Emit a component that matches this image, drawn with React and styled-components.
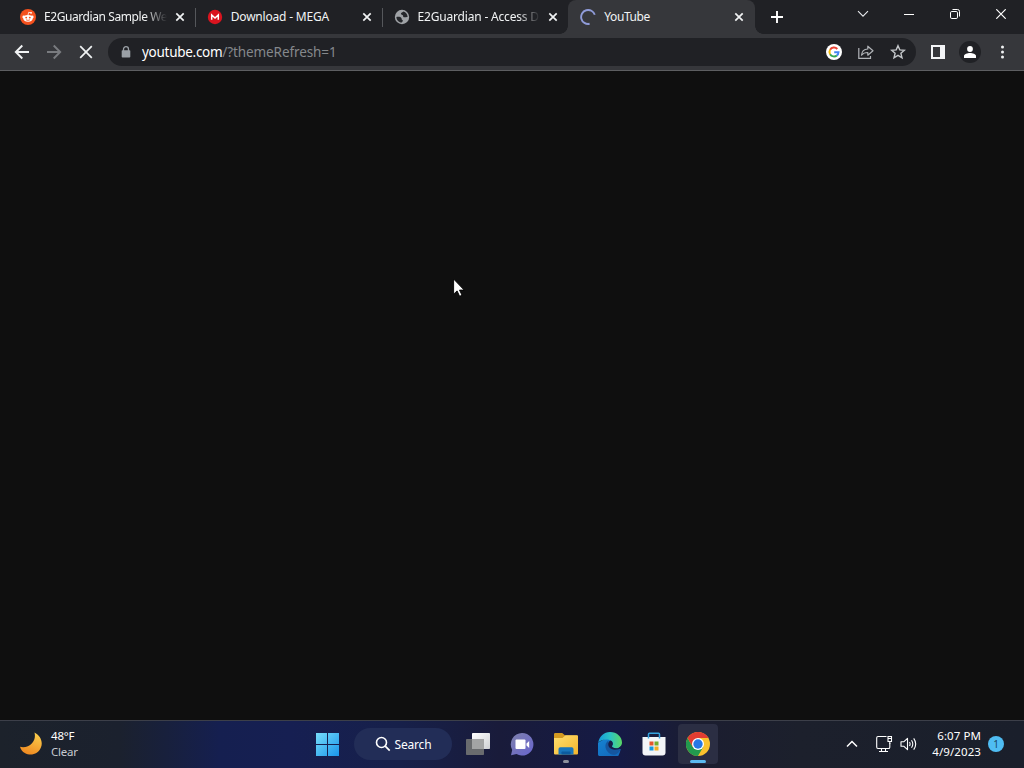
import React from 'react';
import styled, { createGlobalStyle } from 'styled-components';

const GlobalStyle = createGlobalStyle`
  * {
    box-sizing: border-box;
  }
  body {
    margin: 0;
    overflow: hidden;
    background: #0f0f0f;
    font-family: 'Noto Sans', 'Open Sans', sans-serif;
  }
  svg {
    display: block;
    flex: none;
  }
`

const RedditIcon = () => (
  <svg width="16" height="16" viewBox="0 0 16 16">
    <circle cx="8" cy="8" r="8" fill="#f4511e" />
    <circle cx="3.7" cy="7.9" r="1.3" fill="#fff" />
    <circle cx="12.3" cy="7.9" r="1.3" fill="#fff" />
    <ellipse cx="8" cy="9.3" rx="4.7" ry="3.4" fill="#fff" />
    <path d="M8 6 8.7 3.3 11 3.8" fill="none" stroke="#fff" strokeWidth="0.8" />
    <circle cx="11.1" cy="3.8" r="0.9" fill="#fff" />
    <circle cx="6.2" cy="8.6" r="0.95" fill="#f4511e" />
    <circle cx="9.8" cy="8.6" r="0.95" fill="#f4511e" />
    <path d="M6 10.8q2 1.2 4 0" fill="none" stroke="#f4511e" strokeWidth="0.8" />
  </svg>
)

const MegaIcon = () => (
  <svg width="16" height="16" viewBox="0 0 16 16">
    <circle cx="8" cy="8" r="7.2" fill="#d9141f" />
    <path d="M4.700 10.800V5.900L8 9l3.300-3.100v4.900" fill="none" stroke="#fff" strokeWidth="1.500" />
  </svg>
)

const GlobeIcon = () => (
  <svg width="16" height="16" viewBox="0 0 16 16">
    <circle cx="8" cy="8" r="7.2" fill="#9fa2a6" />
    <path d="M2.400 8c2-.4 4.400-.2 5 1 .5.900-.2 1.500 1 1.900 1 .4.300 1.500-.7 2.700C4.600 13.400 2.400 11 2.400 8z" fill="#25272b" />
    <path d="M9.500 2.600c-.6 1-2.600.9-2.600 2.200 0 1.100 1.600.7 2.100 1.600.4.800-.2 1.600.9 1.900 1.400.3 2.300-.6 3.700-.3-.1-2.700-1.700-4.700-4.100-5.400z" fill="#25272b" />
  </svg>
)

const LoadingIcon = () => (
  <svg width="16" height="16" viewBox="0 0 16 16">
    <path d="M14.800 5.800A7 7 0 1 0 9.600 14.800" fill="none" stroke="#8f9bd8" strokeWidth="1.900" />
  </svg>
)

const CloseIcon = () => (
  <svg width="10" height="10" viewBox="0 0 10 10">
    <path d="M1.300 1.300l7.400 7.400M8.700 1.300l-7.400 7.400" stroke="#f1f3f4" strokeWidth="1.700" />
  </svg>
)

const GoogleIcon = () => (
  <svg width="16" height="16" viewBox="0 0 16 16">
    <circle cx="8" cy="8" r="8" fill="#fff" />
    <g fill="none" strokeWidth="2">
      <path d="M11.300 5A4.500 4.500 0 0 0 4.100 5.800" stroke="#ea4335" />
      <path d="M4.100 5.700a4.500 4.500 0 0 0 0 4.600" stroke="#fbbc05" />
      <path d="M4.100 10.200A4.500 4.500 0 0 0 10.900 11.400" stroke="#34a853" />
      <path d="M10.800 11.500A4.500 4.500 0 0 0 12.500 8.200H8.200" stroke="#4285f4" />
    </g>
  </svg>
)

const MoonIcon = () => (
  <svg width="24" height="24" viewBox="0 0 24 24">
    <defs>
      <linearGradient id="moon" x1="0.8" y1="0" x2="0.4" y2="1">
        <stop offset="0" stopColor="#fbd04e" />
        <stop offset="1" stopColor="#ef8a21" />
      </linearGradient>
    </defs>
    <path d="M15.500 .500C21 3.300 24.300 9.500 22 15.300 19.300 22.500 11.500 24.300 5.800 21.100 3.500 19.800 1.800 17.400 1 14.800 5 15.800 10 14.800 13 11.300 15.700 8.100 16.500 4.500 15.500.500z" fill="url(#moon)" />
  </svg>
)

const WindowsIcon = () => (
  <svg width="24" height="24" viewBox="0 0 24 24">
    <defs>
      <linearGradient id="win" x1="0" y1="0" x2="24" y2="24" gradientUnits="userSpaceOnUse">
        <stop offset="0" stopColor="#7be0fb" />
        <stop offset="1" stopColor="#1995ea" />
      </linearGradient>
    </defs>
    <path d="M1 1h11v11H1zM13 1h11v11H13zM1 13h11v11H1zM13 13h11v11H13z" fill="url(#win)" />
  </svg>
)

const TaskViewIcon = () => (
  <svg width="24" height="24" viewBox="0 0 24 24">
    <defs>
      <linearGradient id="pane" x1="0" y1="0" x2="1" y2="1">
        <stop offset="0" stopColor="#fff" />
        <stop offset="1" stopColor="#ced0d4" />
      </linearGradient>
    </defs>
    <rect y="7" width="18" height="16" rx="0.8" fill="#696b6e" />
    <rect x="6" y="1" width="18" height="16" rx="0.8" fill="url(#pane)" />
    <path d="M6 7h12v10H6z" fill="#a3a4a5" />
  </svg>
)

const ChatIcon = () => (
  <svg width="24" height="24" viewBox="0 0 24 24">
    <defs>
      <linearGradient id="chat" x1="0" y1="0" x2="1" y2="1">
        <stop offset="0" stopColor="#7d80ac" />
        <stop offset="1" stopColor="#6864cf" />
      </linearGradient>
    </defs>
    <path d="M12 1a11.300 11.300 0 1 1-5.500 21.100L1 23.200l1.200-5.300A11.300 11.300 0 0 1 12 1z" fill="url(#chat)" />
    <rect x="5.500" y="7.500" width="10" height="9.500" rx="1" fill="#fff" />
    <path d="M16.500 11.500l2.700-2.600v7.200l-2.700-2.600z" fill="#fff" />
  </svg>
)

const FolderIcon = () => (
  <svg width="24" height="24" viewBox="0 0 24 24">
    <defs>
      <linearGradient id="folder" x1="0" y1="0" x2="1" y2="1">
        <stop offset="0" stopColor="#ffe06f" />
        <stop offset="1" stopColor="#f5b52c" />
      </linearGradient>
    </defs>
    <path d="M0 2.200Q0 1 1.200 1h7l3 2.500h11.600Q24 3.500 24 5v8H0z" fill="#d49a20" />
    <path d="M0 6h8.500l3-2.800H23q1 0 1 1v17.300q0 1-1 1H1q-1 0-1-1z" fill="url(#folder)" />
    <path d="M4.500 22.500V17q0-1.800 1.800-1.800h11.400q1.800 0 1.800 1.800v5.500z" fill="#1976bb" />
    <path d="M7.500 22.500v-2.300q0-.7.700-.7h7.600q.7 0 .7.700v2.300z" fill="#0c5b9e" />
  </svg>
)

const EdgeIcon = () => (
  <svg width="24" height="24" viewBox="0 0 24 24">
    <defs>
      <linearGradient id="edgeTop" x1="0" y1="0.500" x2="1" y2="0.500">
        <stop offset="0" stopColor="#159bdc" />
        <stop offset="0.500" stopColor="#2cc3c4" />
        <stop offset="1" stopColor="#59d764" />
      </linearGradient>
      <linearGradient id="edgeBody" x1="0" y1="0" x2="0.600" y2="1">
        <stop offset="0" stopColor="#1687d5" />
        <stop offset="1" stopColor="#1267ba" />
      </linearGradient>
    </defs>
    <path d="M22.400 17.800A12 12 0 1 1 .3 10.500L12 4l8 10z" fill="url(#edgeBody)" />
    <path d="M.3 10.500C1.300 4.500 6 0 12 0c7 0 12 5 12 10.500 0 3.300-2.500 5.700-6 5.700-2.500 0-4-1-4-1.900 0-.7.900-1 .9-2.500C14.900 9.100 12 7.500 8.500 7.500 4.500 7.500 1.500 9 .3 10.500z" fill="url(#edgeTop)" />
    <path d="M10.600 8.400c-3 1.900-3.900 5.500-2.500 8.800 1.600 3.700 5 5.900 9 5.600 2.500-1.200 4.500-3.100 5.600-5.300.2-.5-.1-.7-.6-.4-2.300 1.100-5.300 1.200-7.800-.2-3.300-1.800-4.700-5.500-3.700-8.500z" fill="#15569f" />
    <path d="M14 14.300c0-.7.900-1 .9-2.500 0-1.400-.9-2.500-2.200-3.200-1.600.6-2.500 2-2.500 3.600 0 2.400 1.800 4.300 4.100 5 3 .9 5.800.6 7.800-.5l1.200-2.800c-1.100 1.500-2.900 2.300-5.300 2.300-2.500 0-4-1-4-1.900z" fill="#171d46" />
  </svg>
)

const StoreIcon = () => (
  <svg width="24" height="24" viewBox="0 0 24 24">
    <path d="M.5 5h23v15.500q0 3-3 3h-17q-3 0-3-3z" fill="#f3f5f8" />
    <path d="M6.500 6.500V2.200Q6.500 1.300 7.400 1.300h9.200q.9 0 .9.900v4.300" fill="none" stroke="#35a3df" strokeWidth="1.500" />
    <path d="M7.500 9.500h4v4h-4z" fill="#e4572e" />
    <path d="M12.500 9.500h4v4h-4z" fill="#75ad2e" />
    <path d="M7.500 14.500h4v4h-4z" fill="#1798df" />
    <path d="M12.500 14.500h4v4h-4z" fill="#f2ae24" />
  </svg>
)

const ChromeIcon = () => (
  <svg width="24" height="24" viewBox="0 0 24 24">
    <circle cx="12" cy="12" r="12" fill="#fbc22d" />
    <path d="M12 12 6.800 15 1.600 6A12 12 0 0 0 12 24l5.200-9z" fill="#229a4e" />
    <path d="M1.600 6A12 12 0 0 1 22.400 6H12L6.800 15z" fill="#e23c32" />
    <circle cx="12" cy="12" r="6" fill="#fff" />
    <circle cx="12" cy="12" r="4.700" fill="#2677e5" />
  </svg>
)

const tabs = [
  { title: 'E2Guardian Sample We', icon: <RedditIcon />, fade: true, spacing: '-0.42px' },
  { title: 'Download - MEGA', icon: <MegaIcon />, divider: true, spacing: '-0.2px' },
  { title: 'E2Guardian - Access D', icon: <GlobeIcon />, divider: true, fade: true, spacing: '-0.18px' },
  { title: 'YouTube', icon: <LoadingIcon />, active: true, spacing: '-0.4px' },
]

export const App = () => {
  return (
    <>
      <GlobalStyle />
      <Screen>
        <TabStrip>
          {tabs.map((tab) => (
            <Tab key={tab.title} $active={tab.active} $divider={tab.divider}>
              {tab.icon}
              <TabTitle $fade={tab.fade} $spacing={tab.spacing}>{tab.title}</TabTitle>
              <CloseIcon />
            </Tab>
          ))}
          <NewTab>
            <svg width="12" height="12" viewBox="0 0 12 12">
              <path d="M6 0v12M0 6h12" stroke="#fff" strokeWidth="1.900" />
            </svg>
          </NewTab>
          <WindowButtons>
            <WindowButton>
              <svg width="12" height="8" viewBox="0 0 12 8">
                <path d="M1 1.200l5 5 5-5" fill="none" stroke="#e8eaed" strokeWidth="1.100" />
              </svg>
            </WindowButton>
            <WindowButton>
              <svg width="10" height="10" viewBox="0 0 10 10">
                <path d="M0 5.500h10" stroke="#fff" />
              </svg>
            </WindowButton>
            <WindowButton>
              <svg width="10" height="10" viewBox="0 0 10 10">
                <rect x="0.500" y="2.500" width="7" height="7" rx="1.300" fill="none" stroke="#fff" />
                <path d="M2.500.5H7.500q2 0 2 2v5" fill="none" stroke="#fff" />
              </svg>
            </WindowButton>
            <WindowButton>
              <svg width="10" height="10" viewBox="0 0 10 10">
                <path d="M.3.300l9.400 9.400M9.700.300L.3 9.700" stroke="#fff" strokeWidth="1.200" />
              </svg>
            </WindowButton>
          </WindowButtons>
        </TabStrip>

        <Toolbar>
          <ToolButton>
            <svg width="16" height="16" viewBox="0 0 16 16">
              <path d="M15 8H2M8.300 1.500L1.800 8l6.500 6.500" fill="none" stroke="#f1f3f4" strokeWidth="1.900" />
            </svg>
          </ToolButton>
          <ToolButton>
            <svg width="16" height="16" viewBox="0 0 16 16">
              <path d="M1 8h13M7.700 1.500L14.200 8l-6.500 6.500" fill="none" stroke="#797b7f" strokeWidth="1.900" />
            </svg>
          </ToolButton>
          <ToolButton>
            <svg width="14" height="14" viewBox="0 0 14 14">
              <path d="M1.200 1.200l11.600 11.600M12.800 1.200L1.200 12.800" stroke="#f1f3f4" strokeWidth="1.700" />
            </svg>
          </ToolButton>
          <AddressBar>
            <svg width="10" height="12" viewBox="0 0 10 12">
              <path d="M2.500 5V3.200a2.500 2.500 0 0 1 5 0V5" fill="none" stroke="#9aa0a6" strokeWidth="1.300" />
              <rect x="0.700" y="4.300" width="8.600" height="7.200" rx="0.800" fill="#9aa0a6" />
            </svg>
            <Address><b>youtube.com</b>/?themeRefresh=1</Address>
            <AddressIcons>
              <GoogleIcon />
              <svg width="16" height="16" viewBox="0 0 16 16">
                <path d="M.8 4v10.400h11.700V12" fill="none" stroke="#b1b4b8" strokeWidth="1.200" />
                <path d="M3.500 11.200C3.800 7.500 6 5.200 9.800 5V2.200L15 6.700l-5.200 4.500V8.500c-2.800 0-4.800.8-6.300 2.700z" fill="none" stroke="#b1b4b8" strokeWidth="1.200" strokeLinejoin="round" />
              </svg>
              <svg width="16" height="16" viewBox="0 0 16 16">
                <path d="M8 1.700l1.800 4.200 4.600.4-3.500 3 1.100 4.500L8 11.400l-4 2.400 1.100-4.500-3.500-3 4.600-.4z" fill="none" stroke="#c4c7ca" strokeWidth="1.400" />
              </svg>
            </AddressIcons>
          </AddressBar>
          <ToolbarEnd>
            <svg width="14" height="14" viewBox="0 0 14 14">
              <path d="M0 0h14v14H0zM2 2v10h7V2z" fill="#f4f5f7" fillRule="evenodd" />
            </svg>
            <Profile>
              <svg width="12" height="12" viewBox="0 0 12 12">
                <circle cx="6" cy="3" r="2.900" fill="#fff" />
                <path d="M0 12v-2c0-2 3.500-3 6-3s6 1 6 3v2z" fill="#fff" />
              </svg>
            </Profile>
            <svg width="5" height="14" viewBox="0 0 5 14">
              <circle cx="2.500" cy="2" r="1.500" fill="#f1f3f4" />
              <circle cx="2.500" cy="7" r="1.500" fill="#f1f3f4" />
              <circle cx="2.500" cy="12" r="1.500" fill="#f1f3f4" />
            </svg>
          </ToolbarEnd>
        </Toolbar>

        <Page>
          <Cursor width="13" height="20" viewBox="0 0 13 20">
            <path d="M.6 1v15.200l3.500-3.300 2.500 5.400L9 17.200l-2.500-5.100h4.700z" fill="#fff" stroke="#000" strokeWidth="0.900" />
          </Cursor>
        </Page>

        <Taskbar>
          <Weather>
            <MoonIcon />
            <WeatherText>
              <div>48°F</div>
              <span>Clear</span>
            </WeatherText>
          </Weather>

          <Apps>
            <AppButton><WindowsIcon /></AppButton>
            <Search>
              <svg width="16" height="16" viewBox="0 0 16 16">
                <circle cx="6.500" cy="6.500" r="5" fill="none" stroke="#fff" strokeWidth="1.600" />
                <path d="M10.200 10.200l4.500 4.500" stroke="#fff" strokeWidth="1.700" />
              </svg>
              Search
            </Search>
            <AppButton><TaskViewIcon /></AppButton>
            <AppButton><ChatIcon /></AppButton>
            <AppButton $mark="#8d919c" $markWidth="6px"><FolderIcon /></AppButton>
            <AppButton><EdgeIcon /></AppButton>
            <AppButton><StoreIcon /></AppButton>
            <AppButton $active $mark="#5abaf0" $markWidth="16px"><ChromeIcon /></AppButton>
          </Apps>

          <Tray>
            <svg width="12" height="8" viewBox="0 0 12 8">
              <path d="M1 6.500l5-5 5 5" fill="none" stroke="#fff" strokeWidth="1.500" />
            </svg>
            <TrayIcons>
              <svg width="17" height="18" viewBox="0 0 17 18">
                <path d="M10.500 1.500H2Q.7 1.500.7 3v9Q.7 13.500 2 13.500h10.500q1.300 0 1.300-1.300V8M5.500 13.500v3M9.500 13.500v3M3 16.500h9" fill="none" stroke="#fff" strokeWidth="1.100" />
                <path d="M12 1.500h3.500v5H12zM12 3.500h3.500M13.800 6.500V9" fill="none" stroke="#fff" strokeWidth="1.100" />
              </svg>
              <svg width="17" height="16" viewBox="0 0 17 16">
                <path d="M1 5.800h2.700L7.500 2.300v11.400l-3.800-3.500H1z" fill="none" stroke="#fff" strokeWidth="1.100" strokeLinejoin="round" />
                <path d="M9.500 6q1.200 2 0 4M11.500 4.200q2.600 3.800 0 7.600M13.700 2.400q4 5.600 0 11.200" fill="none" stroke="#fff" strokeWidth="1.100" />
              </svg>
            </TrayIcons>
            <Clock>
              <div>6:07 PM</div>
              <div>4/9/2023</div>
            </Clock>
            <Badge>1</Badge>
          </Tray>
        </Taskbar>
      </Screen>
    </>
  )
}
export default App;

const Screen = styled.div`
  width: 1024px;
  height: 768px;
  display: flex;
  flex-direction: column;
  overflow: hidden;
`

const TabStrip = styled.div`
  height: 34px;
  padding-left: 8px;
  display: flex;
  background: #202125;
`

const Tab = styled.div`
  position: relative;
  width: 186.75px;
  height: 34px;
  padding: 0 ${({ $active }) => ($active ? '11px' : '10px')} 0 12px;
  display: flex;
  align-items: center;
  color: #f1f3f4;
  background: ${({ $active }) => ($active ? '#36373b' : 'transparent')};
  border-radius: 8px 8px 0 0;

  /* rounded feet of the selected tab */
  &::before,
  &::after {
    content: '';
    display: ${({ $active }) => ($active ? 'block' : 'none')};
    position: absolute;
    bottom: 0;
    width: 8px;
    height: 8px;
  }
  &::before {
    left: -8px;
    background: radial-gradient(circle at 0 0, transparent 7.5px, #36373b 8px);
  }
  &::after {
    right: -8px;
    background: radial-gradient(circle at 100% 0, transparent 7.5px, #36373b 8px);
  }

  ${({ $divider }) => $divider && `
    background: linear-gradient(#55575b, #55575b) left center / 1px 19px no-repeat;
    border-radius: 0;
  `}
`

const TabTitle = styled.div`
  flex: 1;
  min-width: 0;
  margin: 0 8px;
  white-space: nowrap;
  font-size: 12px;
  line-height: 18px;
  letter-spacing: ${({ $spacing }) => $spacing};
  mask-image: ${({ $fade }) => ($fade ? 'linear-gradient(90deg, #000 calc(100% - 22px), transparent)' : 'none')};
`

const NewTab = styled.div`
  width: 44px;
  display: flex;
  align-items: center;
  justify-content: center;
`

const WindowButtons = styled.div`
  margin-left: auto;
  display: flex;
`

const WindowButton = styled.div`
  width: 46px;
  height: 28px;
  display: flex;
  align-items: center;
  justify-content: center;
`

const Toolbar = styled.div`
  height: 37px;
  padding-left: 6px;
  display: flex;
  align-items: center;
  background: #36373b;
  border-bottom: 1px solid #5d5e61;
`

const ToolButton = styled.div`
  width: 32px;
  display: flex;
  justify-content: center;
`

const AddressBar = styled.div`
  width: 808px;
  height: 28px;
  margin-left: 6px;
  padding: 0 10px 0 13px;
  display: flex;
  align-items: center;
  background: #202125;
  border-radius: 14px;
`

const Address = styled.div`
  margin-left: 11px;
  font-size: 13.5px;
  line-height: 20px;
  letter-spacing: -0.1px;
  color: #85888c;

  b {
    font-weight: 400;
    letter-spacing: -0.28px;
    color: #fff;
  }
`

const AddressIcons = styled.div`
  margin-left: auto;
  display: flex;
  gap: 16px;
`

const ToolbarEnd = styled.div`
  padding-left: 15px;
  display: flex;
  align-items: center;
`

const Profile = styled.div`
  width: 22px;
  height: 22px;
  margin: 0 19px 0 14px;
  display: flex;
  align-items: center;
  justify-content: center;
  background: #202125;
  border-radius: 50%;
`

const Page = styled.div`
  position: relative;
  flex: 1;
  background: #0f0f0f;
`

const Cursor = styled.svg`
  position: absolute;
  left: 453px;
  top: 207px;
`

const Taskbar = styled.div`
  height: 48px;
  padding-bottom: 1px;
  display: grid;
  grid-template-columns: 307px 1fr 306px;
  color: #fff;
  background: linear-gradient(90deg, #1c222b 0, #1b212e 120px, #18203c 165px, #151f50 220px, #161f52 290px, #17204a 400px, #191b3a 500px, #151a45 620px, #1b1d30 700px, #1c202c 800px, #1a1f2b 100%);
  border-top: 1px solid #3c3f49;
`

const Weather = styled.div`
  padding-left: 19px;
  display: flex;
  align-items: center;
  gap: 8px;
`

const WeatherText = styled.div`
  font-size: 11.5px;
  line-height: 16px;
  letter-spacing: -0.2px;

  span {
    color: #c7cad0;
  }
`

const Apps = styled.div`
  display: flex;
  align-items: center;
  gap: 4px;
`

const AppButton = styled.div`
  position: relative;
  width: 40px;
  height: 40px;
  flex: none;
  display: flex;
  align-items: center;
  justify-content: center;
  border-radius: 4px;
  background: ${({ $active }) => ($active ? '#2b2e43' : 'transparent')};

  &::after {
    content: '';
    position: absolute;
    bottom: 1px;
    width: ${({ $markWidth }) => $markWidth || 0};
    height: 3px;
    border-radius: 2px;
    background: ${({ $mark }) => $mark || 'transparent'};
  }
`

const Search = styled.div`
  width: 98px;
  height: 32px;
  margin: 0 2px 0 3px;
  display: flex;
  align-items: center;
  justify-content: center;
  gap: 4px;
  flex: none;
  font-size: 12px;
  letter-spacing: -0.2px;
  background: #222d57;
  border-radius: 16px;
`

const Tray = styled.div`
  padding-right: 20px;
  display: flex;
  align-items: center;
  justify-content: flex-end;
`

const TrayIcons = styled.div`
  margin: 0 14px 0 18px;
  display: flex;
  align-items: center;
  gap: 7px;
`

const Clock = styled.div`
  width: 50px;
  margin-right: 7px;
  font-size: 11.5px;
  line-height: 16px;
  letter-spacing: 0.08px;
  text-align: right;
  white-space: nowrap;
`

const Badge = styled.div`
  width: 16px;
  height: 16px;
  display: flex;
  align-items: center;
  justify-content: center;
  font-size: 10px;
  color: #174762;
  background: #4fbdf3;
  border-radius: 50%;
`
